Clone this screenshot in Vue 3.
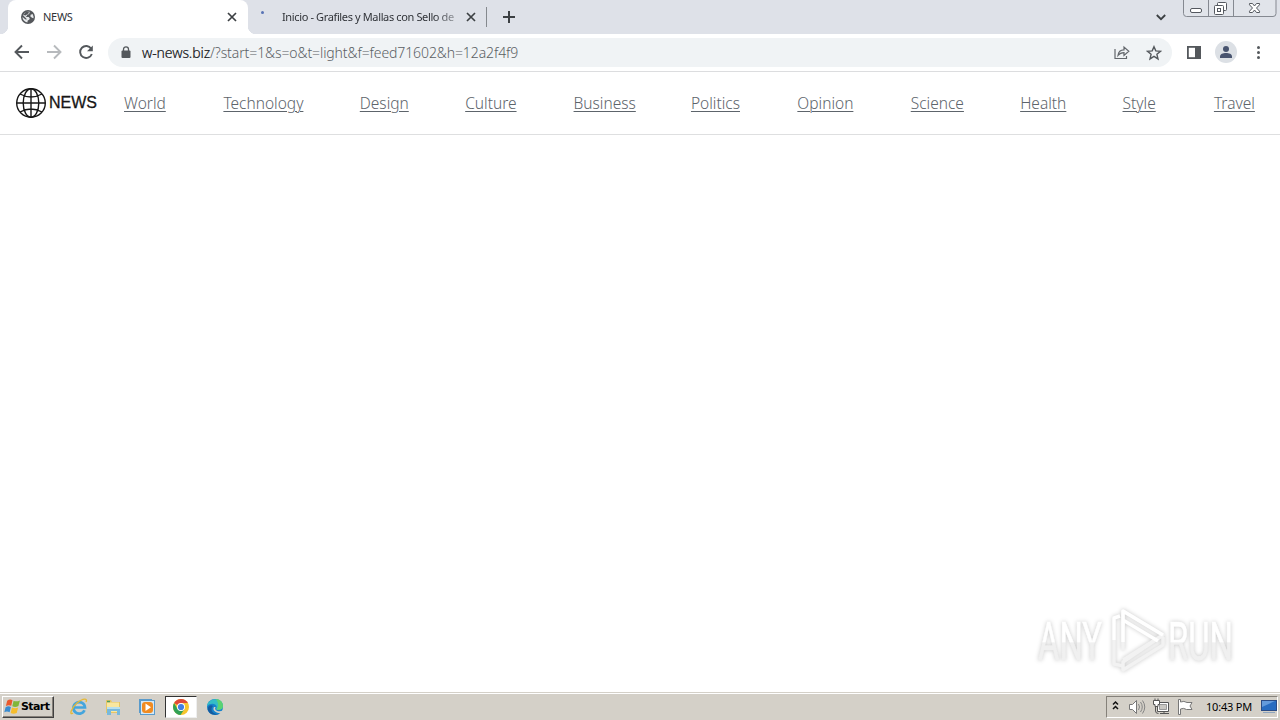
<script setup>
import { ref } from 'vue'

const links = ref([
  { label: 'World', width: 43 },
  { label: 'Technology', width: 80 },
  { label: 'Design', width: 49 },
  { label: 'Culture', width: 52 },
  { label: 'Business', width: 61 },
  { label: 'Politics', width: 50 },
  { label: 'Opinion', width: 57 },
  { label: 'Science', width: 53 },
  { label: 'Health', width: 46 },
  { label: 'Style', width: 35 },
  { label: 'Travel', width: 42 },
])
</script>

<template>
  <div class="screen">
    <header class="tabstrip">
      <div class="tab active">
        <svg class="favicon" width="14" height="14" viewBox="0 0 14 14">
          <circle cx="7" cy="7" r="7" fill="#54575b" />
          <path d="M8.300 1.600 8.700 3 7.300 4.500H6v1.300L4.600 7h3l1.200 1.300-.6 1.400-1.500.7-.3 2C3.500 12 1.500 9.800 1.500 7l2.700 2.300 1.300.5v-1L3.800 7 2.200 5.500C3 3 5.200 1.300 8.300 1.600z" fill="#e7e9eb" />
          <path d="M2.400 5 5 5.500l1-1.300 1.500-.7.5-2L5 1.500z" fill="#54575b" />
          <path d="M9.600 4.800 11.600 4l.9 2.400v1.800l-1.500-.4L9.400 6.500z" fill="#e7e9eb" />
        </svg>
        <span class="tab-title">NEWS</span>
        <svg class="close" width="10" height="10" viewBox="0 0 10 10">
          <path d="M1 1l8 8M9 1l-8 8" />
        </svg>
      </div>
      <div class="tab second">
        <i class="spinner"></i>
        <span class="tab-title faded">Inicio - Grafiles y Mallas con Sello de</span>
        <svg class="close" width="10" height="10" viewBox="0 0 10 10">
          <path d="M1 1l8 8M9 1l-8 8" />
        </svg>
      </div>
      <i class="tab-divider"></i>
      <svg class="plus" width="12" height="12" viewBox="0 0 12 12">
        <path d="M6 0v12M0 6h12" stroke="#3c4043" stroke-width="2" />
      </svg>
      <svg class="chevron" width="10" height="7" viewBox="0 0 10 7">
        <path d="M.8 1 5 5.2 9.2 1" fill="none" stroke="#3c4043" stroke-width="1.8" />
      </svg>
      <svg class="window-buttons" width="94" height="18" viewBox="0 0 94 18">
        <path d="M.5 0v13.500q0 3 3 3h86.500q3 0 3-3V0" fill="#e1e4ea" stroke="#858991" />
        <path d="M25.500 0v16M50.500 0v16" stroke="#858991" />
        <rect x="7.500" y="8.500" width="11" height="4" rx="1.500" fill="#fff" stroke="#54585f" />
        <rect x="34.500" y="2.500" width="9" height="8" rx="1" fill="#fff" stroke="#54585f" />
        <rect x="31.500" y="5.500" width="9" height="9" rx="1" fill="#fff" stroke="#54585f" />
        <rect x="34.500" y="8.500" width="3" height="3" fill="#fff" stroke="#54585f" />
        <path d="M66.500 3.500h3l2 2.500 2-2.500h3v1.300L73.500 8l3 3.200v1.300h-3l-2-2.500-2 2.500h-3v-1.300l3-3.200-3-3.200z" fill="#fff" stroke="#54585f" />
      </svg>
    </header>

    <div class="toolbar">
      <svg class="nav-icons" width="108" height="37" viewBox="0 0 108 37">
        <g fill="none" stroke-width="1.900">
          <path d="M29 18H16M22 11.500l-6.500 6.500 6.500 6.500" stroke="#54585c" />
          <path d="M47 18h13M54 11.500l6.500 6.500-6.500 6.500" stroke="#b7babd" />
          <path d="M91.200 14.700A6 6 0 1 0 91.800 20" stroke="#54585c" />
        </g>
        <path d="M92.800 11.500v5.800H87z" fill="#54585c" />
      </svg>
      <div class="address">
        <svg class="lock" width="10" height="13" viewBox="0 0 10 13">
          <rect x=".5" y="4.500" width="9" height="7.500" rx="1" fill="#54585c" />
          <path d="M2.500 5V3.200a2.500 2.300 0 0 1 5 0V5" fill="none" stroke="#54585c" stroke-width="1.300" />
        </svg>
        <span class="url"><b>w-news.biz</b>/?start=1&amp;s=o&amp;t=light&amp;f=feed71602&amp;h=12a2f4f9</span>
        <svg class="share" width="16" height="15" viewBox="0 0 16 15" fill="none" stroke="#63676c" stroke-width="1.200">
          <path d="M1 4v9.500h11.500V11" />
          <path d="M4 10.500c.4-3.600 2.600-5.600 6-5.600V2l4.800 4.300L10 10.500V7.700C7.500 7.700 5.500 8.500 4 10.500z" />
        </svg>
        <svg class="star" width="16" height="16" viewBox="0 0 16 16">
          <path d="M8 1.700l1.800 4.200 4.700.4-3.600 3 1.100 4.600L8 11.400l-4 2.500 1.100-4.600-3.600-3 4.700-.4z" fill="none" stroke="#54585c" stroke-width="1.400" />
        </svg>
      </div>
      <svg class="tools" width="108" height="37" viewBox="0 0 108 37">
        <rect x="15.900" y="12.900" width="12.200" height="11.200" fill="#fff" stroke="#54585c" stroke-width="1.800" />
        <path d="M23 12h6v13h-6z" fill="#54585c" />
        <circle cx="54" cy="18" r="11" fill="#dce0e5" />
        <circle cx="54" cy="15" r="3" fill="#48546f" />
        <path d="M48 24v-1.500c0-4.600 12-4.600 12 0V24z" fill="#48546f" />
        <g fill="#54585c">
          <circle cx="86.500" cy="13.500" r="1.500" />
          <circle cx="86.500" cy="18.500" r="1.500" />
          <circle cx="86.500" cy="23.500" r="1.500" />
        </g>
      </svg>
    </div>

    <nav class="site-nav">
      <div class="brand">
        <svg width="32" height="32" viewBox="0 0 32 32" fill="none" stroke="#171717" stroke-width="1.400">
          <circle cx="16" cy="16" r="14.300" />
          <ellipse cx="16" cy="16" rx="7.800" ry="14.300" />
          <path d="M16 1.700v28.600M1.700 16h28.600M5 7q11 6 22 0M5 25q11-6 22 0" />
        </svg>
        <span>NEWS</span>
      </div>
      <a v-for="link in links" :key="link.label" :style="{ width: link.width + 'px' }">{{ link.label }}</a>
    </nav>

    <main class="page">
      <svg class="watermark" width="212" height="76" viewBox="0 0 212 76">
        <defs>
          <linearGradient id="wm" gradientUnits="userSpaceOnUse" x1="0" y1="22" x2="0" y2="61">
            <stop offset="0.500" stop-color="#fff" />
            <stop offset="0.540" stop-color="#f0f0f0" />
          </linearGradient>
        </defs>
        <g class="watermark-text" fill="url(#wm)" stroke="url(#wm)" stroke-width="0.600">
          <text x="8" y="60" textLength="64" lengthAdjust="spacingAndGlyphs">ANY</text>
          <text x="138" y="60" textLength="65" lengthAdjust="spacingAndGlyphs">RUN</text>
        </g>
        <g class="watermark-mark" fill="none" stroke-width="3.500" stroke-linejoin="round">
          <path d="M93 50V11l40 24-40 27v8l40-25v-8" stroke="#f2f2f2" />
          <path d="M84 40v24l9 2M133 35 93 60" stroke="#f2f2f2" />
          <path d="M93 42V11l40 24M93 20l35 21M84 40V18l6-2" stroke="#fff" />
        </g>
      </svg>
    </main>

    <footer class="taskbar">
      <div class="start">
        <svg width="17" height="17" viewBox="0 0 16 16">
          <path d="M3 2.500q2.500-2 5-.5L6.800 7.300Q4.300 6 1.800 7.600z" fill="#e9592d" />
          <path d="M9 2.500q2.500 1.400 6-.2L13.600 7.600q-3 1.500-5.800.2z" fill="#80b63a" />
          <path d="M1.500 8.600Q4 7 6.500 8.400L5.300 13.500Q2.800 12 .3 13.500z" fill="#388bd0" />
          <path d="M7.500 9q3 1.300 5.800 0L12 14q-3 1.500-5.700.1z" fill="#f6bd2c" />
        </svg>
        <span>Start</span>
      </div>
      <div class="launchers">
        <div class="launcher">
          <svg width="18" height="18" viewBox="0 0 18 18">
            <path d="M14.500 12.300A5.800 5.800 0 1 1 15 9.500H4" fill="none" stroke="#44a5dd" stroke-width="2.700" />
            <path d="M3 15C-1 18 1 10 7 5s11-5 9-1" fill="none" stroke="#e6b936" stroke-width="1.400" />
          </svg>
        </div>
        <div class="launcher">
          <svg width="18" height="18" viewBox="0 0 18 18">
            <path d="M2 2h5l1 2h8v11H2z" fill="#e5c566" />
            <path d="M3 4.500h12V14H3z" fill="#f9e79f" />
            <path d="M3 3.500h3" stroke="#4c9d5e" stroke-width="1.500" />
            <path d="M3 9h13v8h-3v-4H7v4H3z" fill="#78b9dc" />
            <path d="M3 9h13v2H3z" fill="#b7dfee" />
          </svg>
        </div>
        <div class="launcher">
          <svg width="18" height="18" viewBox="0 0 18 18">
            <rect x="1.500" y="1.500" width="12" height="13" fill="#bfdcf0" stroke="#5a9bcb" />
            <rect x="2.500" y="2.500" width="14" height="14" fill="#d5e8f5" stroke="#5a9bcb" />
            <rect x="4" y="4" width="11" height="11" rx="3" fill="#f08b21" />
            <path d="M7.500 5.500v7.500L13 9.300z" fill="#fff" />
          </svg>
        </div>
        <div class="launcher pressed">
          <svg width="18" height="18" viewBox="0 0 18 18">
            <circle cx="9" cy="9" r="8" fill="#f7c52d" />
            <path d="M9 9 2.100 5A8 8 0 0 1 15.900 5H9z" fill="#df4939" />
            <path d="M2.100 5A8 8 0 0 0 8.500 17L12.500 11 9 9 5.500 11z" fill="#31a156" />
            <circle cx="9" cy="9" r="4" fill="#fff" />
            <circle cx="9" cy="9" r="3.100" fill="#427fe3" />
          </svg>
        </div>
        <div class="launcher">
          <svg width="18" height="18" viewBox="0 0 18 18">
            <circle cx="9" cy="9" r="8" fill="#1582cc" />
            <path d="M1 8C2-1 17-1 17 8c0 4-5 5-7 3 3-4-4-8-9-3z" fill="#34bdc6" />
            <path d="M10 1.100C14 1.300 17 4 17 8c0 3.500-4 4.500-6.500 3.400 2.500-3 2-6-.5-10.300z" fill="#5bd273" />
            <path d="M7 8c-4 4 1 9 6 7.900C5 19-1 12 3 8q2-1.700 4 0z" fill="#155b9f" />
            <path d="M9.700 9c-2 3 2 5.500 7.500 3.600l-2 2.400C9.500 15.500 6 12 8 9z" fill="#d4d0c8" />
          </svg>
        </div>
      </div>
      <div class="tray">
        <svg width="88" height="20" viewBox="0 0 88 20" fill="none">
          <path d="M6 7.500l2.500-2.500L11 7.500M6 12l2.500-2.500L11 12" stroke="#111" stroke-width="1.500" />
          <path d="M22.500 7.500h3l4-4v13l-4-4h-3z" fill="#fff" stroke="#777" />
          <path d="M31.500 7q2 3 0 6M33.500 5q3.500 5 0 10M35.500 3.500q4.500 6.500 0 13" stroke="#858585" />
          <path d="M50.500 5.500h11v9h-11z" fill="#fff" stroke="#555" />
          <path d="M52.500 7.500h7v5h-7z" fill="#c9c7c2" stroke="#999" />
          <path d="M53 16.500h9M57 14v2M48.500 8v6q0 2.500 3 2.500" stroke="#555" />
          <path d="M46.500 3.500h6v4h-1.500v2h-3v-2h-1.500zM48 1.500v2M51 1.500v2" fill="#fff" stroke="#555" />
          <path d="M71.500 2.500v15h2V12q3-1.500 6 .5h5.500l-2-3.500 2-3.500h-5q-3-2-6.500-.500V2.500z" fill="#fff" stroke="#777" />
        </svg>
        <span class="clock">10:43 PM</span>
        <svg class="desktop" width="16" height="14" viewBox="0 0 16 14">
          <rect x=".5" y=".5" width="15" height="10" fill="#286cc1" stroke="#2b4c86" />
          <path d="M1 1h13L1 7z" fill="#649bdc" />
          <path d="M2 12.500h12" stroke="#8fa5be" />
        </svg>
      </div>
    </footer>
  </div>
</template>

<style>
body {
  margin: 0;
  overflow: hidden;
}
</style>

<style scoped>
.screen {
  width: 1280px;
  height: 720px;
  display: flex;
  flex-direction: column;
  background: #fff;
  font-family: 'Noto Sans', sans-serif;
  overflow: hidden;
}
.screen * {
  box-sizing: border-box;
}
svg {
  display: block;
  flex: none;
}
.tabstrip {
  height: 34px;
  flex: none;
  display: flex;
  align-items: center;
  background: #dee1e8;
  padding-left: 8px;
}
.tab {
  display: flex;
  align-items: center;
  height: 34px;
  color: #303338;
  font-size: 11px;
}
.tab.active {
  width: 240px;
  background: #fff;
  border-radius: 8px 8px 0 0;
  padding: 0 11px 0 13px;
  position: relative;
}
.tab.active::before,
.tab.active::after {
  content: '';
  position: absolute;
  bottom: 0;
  width: 8px;
  height: 8px;
}
.tab.active::before {
  left: -8px;
  background: radial-gradient(circle at 0 0, transparent 8px, #fff 8.5px);
}
.tab.active::after {
  right: -8px;
  background: radial-gradient(circle at 100% 0, transparent 8px, #fff 8.5px);
}
.tab-title {
  margin-left: 8px;
  padding-bottom: 1px;
  white-space: nowrap;
  letter-spacing: -0.3px;
}
.close {
  margin-left: auto;
  stroke: #3c4043;
  stroke-width: 1.7;
}
.tab.second {
  width: 228px;
  padding-left: 13px;
}
.spinner {
  width: 3px;
  height: 3px;
  margin-bottom: 10px;
  border-radius: 50%;
  background: #5873b5;
}
.faded {
  width: 176px;
  margin-left: 18px;
  letter-spacing: -0.37px;
  mask-image: linear-gradient(90deg, #000 87%, rgba(0, 0, 0, 0.3));
}
.tab-divider {
  width: 1px;
  height: 20px;
  margin-left: 10px;
  background: #85898e;
}
.plus {
  margin-left: 16px;
}
.chevron {
  margin-left: auto;
}
.window-buttons {
  align-self: flex-start;
  margin: 0 3px 0 17px;
}
.toolbar {
  height: 38px;
  flex: none;
  display: flex;
  align-items: center;
  border-bottom: 1px solid #dcdddf;
}
.address {
  width: 1064px;
  height: 29px;
  display: flex;
  align-items: center;
  padding: 0 10px 0 13px;
  border-radius: 15px;
  background: #f0f3f5;
}
.url {
  margin-left: 11px;
  color: #5b5f64;
  font-size: 14px;
  font-weight: 300;
  letter-spacing: -0.1px;
}
.url b {
  color: #101114;
  font-weight: 300;
  -webkit-text-stroke: 0.2px #101114;
}
.share {
  margin-left: auto;
}
.star {
  margin-left: 16px;
}
.site-nav {
  height: 63px;
  flex: none;
  display: flex;
  align-items: center;
  gap: 56.4px;
  padding: 0 24px 0 15px;
  border-bottom: 1px solid #dedfe0;
}
.brand {
  width: 83px;
  flex: none;
  display: flex;
  align-items: center;
  gap: 2px;
  margin-right: -30.4px;
  color: #161616;
  font: 400 16px 'Liberation Sans', sans-serif;
  -webkit-text-stroke: 0.3px #161616;
}
.site-nav a {
  flex: none;
  white-space: nowrap;
  color: #5d646b;
  font-size: 15.5px;
  font-weight: 300;
  text-decoration: underline;
  text-underline-offset: 2px;
  text-decoration-thickness: 1px;
}
.page {
  flex: 1;
  display: flex;
  align-items: flex-end;
  justify-content: flex-end;
  padding: 0 38px 16px 0;
}
.watermark {
  overflow: visible;
}
.watermark-text {
  font: 400 53px Roboto, sans-serif;
  filter: drop-shadow(0 0 2px #c8c8c8);
}
.watermark-mark {
  filter: drop-shadow(0 0 2px #c8c8c8);
}
.taskbar {
  height: 28px;
  flex: none;
  display: flex;
  align-items: center;
  padding: 1px 2px 1px;
  background: #d4d0c8;
  border-top: 1px solid #d4d0c8;
  box-shadow: inset 0 1px #fff;
}
.start {
  width: 52px;
  height: 22px;
  display: flex;
  align-items: center;
  padding-left: 1px;
  border: 1px solid;
  border-color: #fff #404040 #404040 #fff;
  box-shadow: inset -1px -1px #858079;
  color: #000;
  font: 700 11px 'DejaVu Sans', sans-serif;
  letter-spacing: -0.6px;
}
.launchers {
  display: flex;
  gap: 2px;
  margin-left: 9px;
}
.launcher {
  width: 32px;
  height: 22px;
  display: flex;
  align-items: center;
  justify-content: center;
}
.launcher.pressed {
  background: #fff;
  border: 1px solid;
  border-color: #333 #eee #eee #333;
}
.tray {
  width: 172px;
  height: 22px;
  display: flex;
  align-items: center;
  margin-left: auto;
  border: 1px solid;
  border-color: #85817a #fff #fff #85817a;
}
.clock {
  margin-left: 11px;
  color: #000;
  font-size: 11px;
  letter-spacing: -0.2px;
  white-space: nowrap;
}
.desktop {
  margin-left: auto;
}
</style>
